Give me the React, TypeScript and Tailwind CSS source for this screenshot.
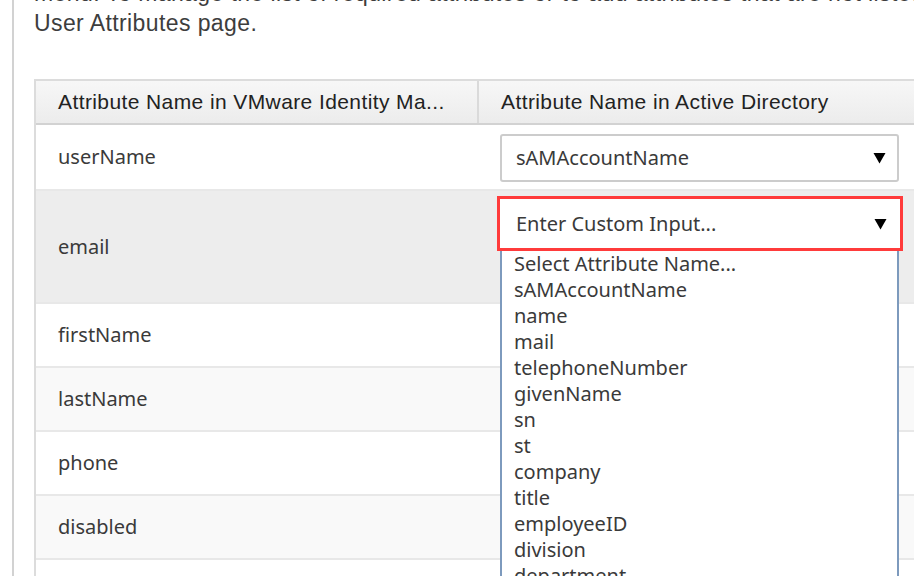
import React from 'react';

const rows = [
  { name: 'firstName', bg: 'bg-white' },
  { name: 'lastName', bg: 'bg-[#f9f9f9]' },
  { name: 'phone', bg: 'bg-white' },
  { name: 'disabled', bg: 'bg-[#f9f9f9]' },
  { name: '', bg: 'bg-white' },
];

const options = [
  'Select Attribute Name...',
  'sAMAccountName',
  'name',
  'mail',
  'telephoneNumber',
  'givenName',
  'sn',
  'st',
  'company',
  'title',
  'employeeID',
  'division',
  'department',
  'manager',
];

function Arrow() {
  return (
    <svg width="13" height="12" viewBox="0 0 13 12" className="shrink-0">
      <path d="M0.5 1 H12.5 L6.5 11.5 Z" fill="#000" />
    </svg>
  );
}

export default function App() {
  return (
    <div className="h-[576px] w-[914px] overflow-hidden bg-white font-['Liberation_Sans',Arial,sans-serif] text-[#333]">
      <div className="ml-3 flex h-full flex-col border-l-2 border-[#d2d2d2] pl-[20px]">
        {/* Intro text, first line cut off by the top of the window */}
        <div className="-mt-[20px] text-[23px] leading-[27px] tracking-[0.4px] text-[#3d3d3d]">
          <p className="whitespace-nowrap">
            menu. To manage the list of required attributes or to add attributes that are not listed, go to the
          </p>
          <p className="mt-[3px]">User Attributes page.</p>
        </div>

        {/* Mapping table */}
        <div className="mt-[42px] w-[920px] border-l-2 border-t-2 border-[#dcdcdc]">
          <div className="flex h-[44px] items-center border-b-2 border-[#d2d2d2] bg-gradient-to-b from-[#f7f7f7] to-[#ececec] text-[21px] tracking-[0.4px] text-[#222]">
            <div className="flex h-full w-[443px] items-center border-r-2 border-[#dadada] pl-[22px]">
              Attribute Name in VMware Identity Ma...
            </div>
            <div className="pl-[22px]">Attribute Name in Active Directory</div>
          </div>

          <div className="font-['Noto_Sans','Open_Sans',sans-serif] text-[20px] text-[#3a3a3a]">
            {/* userName */}
            <div className="flex h-[64px] items-center bg-white">
              <div className="w-[464px] pl-[22px]">userName</div>
              <div className="mt-[2px] flex h-[48px] w-[399px] items-center justify-between rounded-[3px] border-2 border-[#cccccc] bg-white pl-[14px] pr-[11px]">
                <span>sAMAccountName</span>
                <Arrow />
              </div>
            </div>

            {/* email, with its list open */}
            <div className="flex h-[115px] border-y-2 border-[#e8e8e8] bg-[#ededed]">
              <div className="flex w-[461px] items-center pl-[22px]">email</div>
              <div className="relative pt-[5px]">
                <div className="flex h-[55px] w-[406px] items-center justify-between border-[3px] border-[#ff3b3b] bg-white pl-[16px] pr-[13px]">
                  <span>Enter Custom Input...</span>
                  <Arrow />
                </div>
                <div className="absolute left-[3px] top-[60px] z-10 w-[399px] border-x-2 border-[#7d9abd] bg-white pl-[12px] leading-[26px]">
                  {options.map((o) => (
                    <div key={o}>{o}</div>
                  ))}
                </div>
              </div>
            </div>

            {rows.map((r, i) => (
              <div
                key={i}
                className={`flex h-[64px] items-center border-b-2 border-[#e8e8e8] ${r.bg}`}
              >
                <div className="pl-[22px]">{r.name}</div>
              </div>
            ))}
          </div>
        </div>
      </div>
    </div>
  );
}
